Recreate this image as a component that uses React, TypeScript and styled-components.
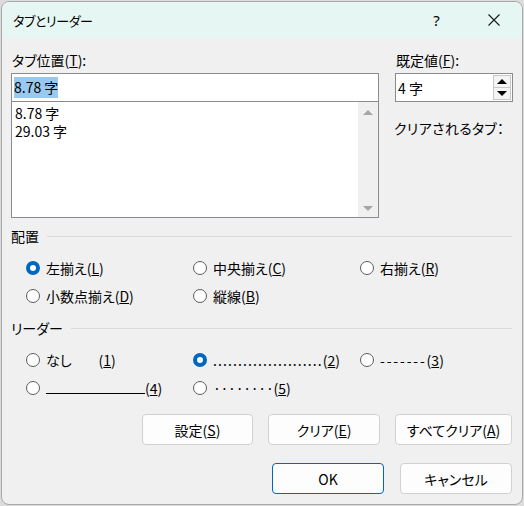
import styled, { createGlobalStyle } from 'styled-components';

const GlobalStyle = createGlobalStyle`
  html, body {
    margin: 0;
    padding: 0;
    background: #dcdcdc;
  }
  body {
    font-family: "Noto Sans CJK JP", "Noto Sans", sans-serif;
    font-feature-settings: "palt";
    color: #000;
  }
`;

const Window = styled.div`
  width: 522px;
  height: 504px;
  margin: 1px 0 0 1px;
  box-sizing: border-box;
  border: 1px solid #a8a8a8;
  border-radius: 8px;
  background: #f0f0f0;
  overflow: hidden;
  display: flex;
  flex-direction: column;
`;

const TitleBar = styled.div`
  height: 36px;
  flex: none;
  display: flex;
  align-items: center;
  background: #e6f6f2;
  padding-left: 11px;
  font-size: 13px;
`;

const Title = styled.div`
  flex: 1;
  letter-spacing: -0.4px;
`;

const TitleButton = styled.div`
  width: 57px;
  height: 36px;
  display: flex;
  align-items: center;
  justify-content: center;
  font-size: 15px;
  font-family: "Noto Sans", sans-serif;
`;

const Body = styled.div`
  padding: 12px 10px 0 9px;
  display: flex;
  flex-direction: column;
  font-size: 14px;
`;

const TopGrid = styled.div`
  display: grid;
  grid-template-columns: 368px 118px;
  column-gap: 16px;
`;

const Column = styled.div`
  display: flex;
  flex-direction: column;
`;

const Label = styled.div<{ $indent?: number }>`
  height: 20px;
  line-height: 20px;
  margin-bottom: 3px;
  padding-left: ${({ $indent }) => $indent ?? 0}px;
  white-space: nowrap;
`;

const TextBox = styled.div`
  height: 29px;
  box-sizing: border-box;
  border: 1px solid #8c8c8c;
  background: #fff;
  display: flex;
  align-items: center;
  padding-left: 2px;
  position: relative;
`;

const Selected = styled.span`
  background: #99c9ef;
  padding: 1px 0;
  line-height: 19px;
`;

const ListBox = styled.div`
  height: 116px;
  box-sizing: border-box;
  border: 1px solid #8a8a94;
  border-top: none;
  background: #fff;
  display: flex;
`;

const ListItems = styled.div`
  flex: 1;
  padding: 2px 3px;
  line-height: 18px;
`;

const ScrollBar = styled.div`
  width: 20px;
  background: #f0f0f0;
  display: flex;
  flex-direction: column;
  justify-content: space-between;
  align-items: center;
  padding: 8px 0 6px;
`;

const Arrow = styled.div<{ $down?: boolean; $color?: string }>`
  width: 0;
  height: 0;
  border-left: 5px solid transparent;
  border-right: 5px solid transparent;
  ${({ $down, $color }) =>
    $down
      ? `border-top: 5px solid ${$color ?? '#a6a6a6'};`
      : `border-bottom: 5px solid ${$color ?? '#a6a6a6'};`}
`;

const SpinBox = styled(TextBox)`
  padding-left: 2px;
`;

const SpinButtons = styled.div`
  position: absolute;
  right: 1px;
  top: 1px;
  bottom: 1px;
  width: 18px;
  display: flex;
  flex-direction: column;
  border: 1px solid #c8c8c8;
  box-sizing: border-box;
`;

const SpinHalf = styled.div<{ $top?: boolean }>`
  flex: 1;
  display: flex;
  align-items: center;
  justify-content: center;
  background: #f4f4f4;
  border-top: ${({ $top }) => ($top ? 'none' : '1px solid #c8c8c8')};
`;

const ClearedLabel = styled.div`
  margin-top: 16px;
  margin-left: -1px;
  letter-spacing: 0.3px;
`;

const SectionHeader = styled.div`
  margin-top: 9px;
  height: 18px;
  display: flex;
  align-items: center;
  gap: 8px;
  &::after {
    content: '';
    flex: 1;
    height: 1px;
    background: #dadada;
  }
`;

const RadioGrid = styled.div`
  margin-top: 9px;
  padding-left: 15px;
  display: grid;
  grid-template-columns: 167px 167px 1fr;
  grid-auto-rows: 28px;
`;

const RadioItem = styled.label`
  display: flex;
  align-items: center;
  gap: 6px;
  white-space: nowrap;
`;

const RadioCircle = styled.span<{ $checked?: boolean }>`
  width: 14px;
  height: 14px;
  box-sizing: border-box;
  border-radius: 50%;
  flex: none;
  ${({ $checked }) =>
    $checked
      ? 'border: 4px solid #0067c0; background: #fff;'
      : 'border: 1px solid #5c5c5c; background: #fff;'}
`;

const Gap = styled.span<{ $w: number }>`
  display: inline-block;
  width: ${({ $w }) => $w}px;
`;

const Leader = styled.span<{ $spacing: number }>`
  letter-spacing: ${({ $spacing }) => $spacing}px;
`;

const LineLeader = styled.span`
  display: inline-block;
  width: 99px;
  height: 12px;
  border-bottom: 1px solid #000;
`;

const ButtonRow = styled.div<{ $top: number; $gap: number }>`
  display: flex;
  justify-content: flex-end;
  gap: ${({ $gap }) => $gap}px;
  margin-top: ${({ $top }) => $top}px;
`;

const Button = styled.button<{ $w: number; $primary?: boolean }>`
  flex: none;
  width: ${({ $w }) => $w}px;
  height: 31px;
  box-sizing: border-box;
  border: 1px solid ${({ $primary }) => ($primary ? '#0067c0' : '#d1d1d1')};
  border-radius: 4px;
  background: #fdfdfd;
  font-family: inherit;
  font-feature-settings: "palt";
  font-size: 14px;
  color: #000;
  padding: 0;
`;

export default function App() {
  return (
    <>
      <GlobalStyle />
      <Window>
        <TitleBar>
          <Title>タブとリーダー</Title>
          <TitleButton>?</TitleButton>
          <TitleButton>
            <svg width="12" height="12" viewBox="0 0 12 12">
              <path d="M0.5 0.5 L11.5 11.5 M11.5 0.5 L0.5 11.5" stroke="#1a1a1a" strokeWidth="1.1" />
            </svg>
          </TitleButton>
        </TitleBar>
        <Body>
          <TopGrid>
            <Column>
              <Label $indent={1}>
                タブ位置(<u>T</u>):
              </Label>
              <TextBox>
                <Selected>8.78 字</Selected>
              </TextBox>
              <ListBox>
                <ListItems>
                  <div>8.78 字</div>
                  <div>29.03 字</div>
                </ListItems>
                <ScrollBar>
                  <Arrow />
                  <Arrow $down />
                </ScrollBar>
              </ListBox>
            </Column>
            <Column>
              <Label $indent={1}>
                既定値(<u>F</u>):
              </Label>
              <SpinBox>
                4 字
                <SpinButtons>
                  <SpinHalf $top>
                    <Arrow $color="#000" />
                  </SpinHalf>
                  <SpinHalf>
                    <Arrow $down $color="#000" />
                  </SpinHalf>
                </SpinButtons>
              </SpinBox>
              <ClearedLabel>クリアされるタブ：</ClearedLabel>
            </Column>
          </TopGrid>

          <SectionHeader>配置</SectionHeader>
          <RadioGrid>
            <RadioItem>
              <RadioCircle $checked />
              <span>
                左揃え(<u>L</u>)
              </span>
            </RadioItem>
            <RadioItem>
              <RadioCircle />
              <span>
                中央揃え(<u>C</u>)
              </span>
            </RadioItem>
            <RadioItem>
              <RadioCircle />
              <span>
                右揃え(<u>R</u>)
              </span>
            </RadioItem>
            <RadioItem>
              <RadioCircle />
              <span>
                小数点揃え(<u>D</u>)
              </span>
            </RadioItem>
            <RadioItem>
              <RadioCircle />
              <span>
                縦線(<u>B</u>)
              </span>
            </RadioItem>
          </RadioGrid>

          <SectionHeader>リーダー</SectionHeader>
          <RadioGrid>
            <RadioItem>
              <RadioCircle />
              <span>
                なし<Gap $w={27} />(<u>1</u>)
              </span>
            </RadioItem>
            <RadioItem>
              <RadioCircle $checked />
              <span>
                <Leader $spacing={1.1}>......................</Leader>(<u>2</u>)
              </span>
            </RadioItem>
            <RadioItem>
              <RadioCircle />
              <span>
                <Leader $spacing={1.8}>-------</Leader>(<u>3</u>)
              </span>
            </RadioItem>
            <RadioItem>
              <RadioCircle />
              <span>
                <LineLeader />(<u>4</u>)
              </span>
            </RadioItem>
            <RadioItem>
              <RadioCircle />
              <span>
                <Leader $spacing={-0.3}>········</Leader>(<u>5</u>)
              </span>
            </RadioItem>
          </RadioGrid>

          <ButtonRow $top={12} $gap={15}>
            <Button $w={111}>
              設定(<u>S</u>)
            </Button>
            <Button $w={112}>
              クリア(<u>E</u>)
            </Button>
            <Button $w={117}>
              すべてクリア(<u>A</u>)
            </Button>
          </ButtonRow>
          <ButtonRow $top={18} $gap={16}>
            <Button $w={112} $primary>
              OK
            </Button>
            <Button $w={112}>キャンセル</Button>
          </ButtonRow>
        </Body>
      </Window>
    </>
  );
}
